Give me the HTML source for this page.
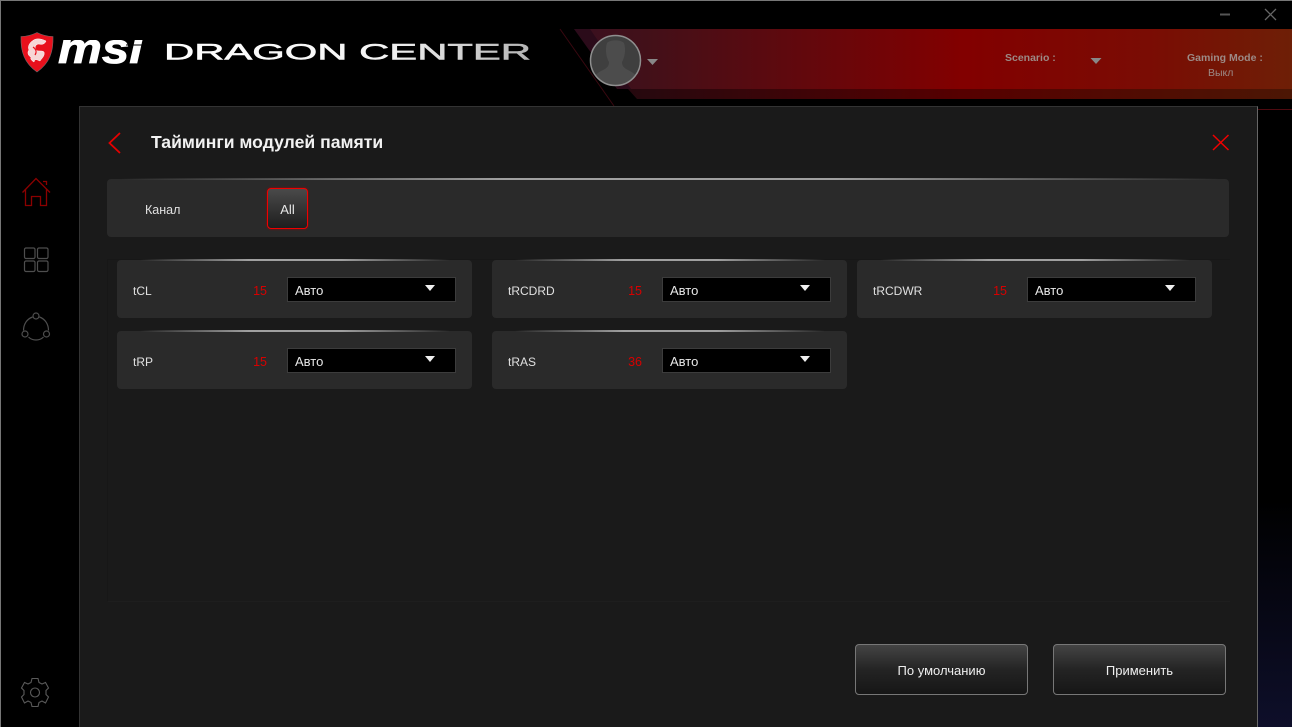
<!DOCTYPE html>
<html>
<head>
<meta charset="utf-8">
<style>
html,body{margin:0;padding:0;background:#000;}
#app{position:relative;width:1292px;height:727px;overflow:hidden;background:#000;font-family:"Liberation Sans",sans-serif;color:#e6e6e6;font-size:13px;}
#app div,#app span{position:absolute;white-space:nowrap;}
.bar{background:#2a2a2a;border-radius:4px;}
.hl{height:2px;background:linear-gradient(90deg,rgba(170,170,170,0),#a0a0a0 35%,#a0a0a0 65%,rgba(170,170,170,0));}
.lbl{line-height:16px;font-size:12px;color:#e0e0e0;}
.val{line-height:16px;font-size:12.5px;color:#d80000;text-align:right;width:30px;}
.sel{width:167px;height:23px;background:#000;border:1px solid #3c3c3c;}
.sel span{left:7px;top:5px;line-height:16px;font-size:13px;color:#e8e8e8;}
.sel i{position:absolute;left:137px;top:7px;width:0;height:0;border-left:5.5px solid transparent;border-right:5.5px solid transparent;border-top:6px solid #f0f0f0;}
.btn{top:644px;width:171px;height:49px;border:1px solid #777;border-radius:4px;background:linear-gradient(#444 0,#242424 50%,#161616 100%);text-align:center;line-height:51px;font-size:13px;color:#eee;}
.hd{font-size:10.5px;line-height:14px;color:#9c8a86;}
</style>
</head>
<body>
<div id="app">
<svg style="position:absolute;left:0;top:0" width="1292" height="727" viewBox="0 0 1292 727" fill="none">
<defs>
<linearGradient id="r1" x1="574" x2="1292" y1="0" y2="0" gradientUnits="userSpaceOnUse">
<stop offset="0" stop-color="#3a1020"/><stop offset=".1" stop-color="#421019"/><stop offset=".54" stop-color="#820000"/><stop offset=".8" stop-color="#7a0c04"/><stop offset="1" stop-color="#6e1f06"/>
</linearGradient>
<linearGradient id="r2" x1="574" x2="1292" y1="0" y2="0" gradientUnits="userSpaceOnUse">
<stop offset="0" stop-color="#1e0810"/><stop offset=".1" stop-color="#28080e"/><stop offset=".54" stop-color="#560000"/><stop offset="1" stop-color="#4c1604"/>
</linearGradient>
<linearGradient id="dc" x1="165" x2="531" y1="0" y2="0" gradientUnits="userSpaceOnUse">
<stop offset="0" stop-color="#fff"/><stop offset=".6" stop-color="#f4f4f4"/><stop offset="1" stop-color="#b4b4b4"/>
</linearGradient>
<linearGradient id="blue" x1="0" x2="0" y1="500" y2="727" gradientUnits="userSpaceOnUse">
<stop offset="0" stop-color="#000"/><stop offset="1" stop-color="#0e0f2a"/>
</linearGradient>
<clipPath id="msiclip"><rect x="50" y="40" width="100" height="30"/></clipPath>
<clipPath id="av"><circle cx="615.500" cy="60.500" r="25"/></clipPath>
</defs>
<rect x="1257" y="110" width="35" height="617" fill="url(#blue)"/>
<path d="M0.500 727V0.500H1292" stroke="#777"/>
<!-- red band -->
<polygon points="574,29 1292,29 1292,99 637,99" fill="url(#r2)"/>
<polygon points="588,29 1292,29 1292,89 631,89" fill="url(#r1)"/>
<polygon points="574,29 590,29 631,89 617,89" fill="#2b0b1a"/>
<path d="M560 29L614 106" stroke="#3a0810"/>
<path d="M1257 109.500H1292" stroke="#4e0a10"/>
<!-- window controls -->
<path d="M1220 14.500H1230" stroke="#555" stroke-width="2"/>
<path d="M1265 9L1276 20M1276 9L1265 20" stroke="#666" stroke-width="1.300"/>
<!-- shield -->
<path d="M37 32.500C42 35 48 36.500 53 36.500C53.500 51 50 63 37 72C24 63 20.500 51 21 36.500C26 36.500 32 35 37 32.500Z" fill="#e8101c" stroke="#6a6a6a" stroke-width=".6"/>
<path d="M46 41C41 38.500 36 38 33 40.500C29 43 27.500 47 29 50C27 52 28 56 31 57C30 59 32 61 34 62C35 58 37 60 40 61C42 58 45 56 44 52C42 50 38 52 36 50C34 47 36 44 39 44C42 45 45 44 46 41Z" fill="#f6d6d6" stroke="#fff" stroke-width=".5"/>
<path d="M33 47C36 49 37 52 35 55" stroke="#e8101c" stroke-width="1.200"/>
<!-- msi logo -->
<g clip-path="url(#msiclip)">
<text x="58" y="63" font-family="Liberation Sans" font-weight="700" font-style="italic" font-size="43" fill="#fff" textLength="85" lengthAdjust="spacingAndGlyphs" stroke="#fff" stroke-width=".8">msi</text>
</g>
<path d="M126 45H144" stroke="#000" stroke-width="1"/>
<!-- dragon center -->
<text x="164" y="59.500" font-family="Liberation Sans" font-size="22" fill="url(#dc)" stroke="url(#dc)" stroke-width=".5" textLength="367" lengthAdjust="spacingAndGlyphs">DRAGON CENTER</text>
<!-- avatar -->
<circle cx="615.500" cy="60.500" r="25" fill="#3f3f3f"/>
<g clip-path="url(#av)">
<path d="M607 43C610 39.500 621 39.500 624 43C626 49 625 57 622 62C622 66 624 68 628 70C632 72 635 74 637 77C630 88 601 88 594 77C596 74 599 72 603 70C607 68 609 66 609 62C606 57 605 49 607 43Z" fill="#4c4c4c"/>
</g>
<circle cx="615.500" cy="60.500" r="25" stroke="#8f8f8f" stroke-width="1.500"/>
<polygon points="647,59 658,59 652.500,65" fill="#888"/>
<polygon points="1090.500,58 1101.500,58 1096,64" fill="#888"/>
<!-- sidebar icons -->
<g stroke="#8c0000" stroke-width="1.300">
<path d="M22.500 192.500L36 178.500L50 192.500"/>
<path d="M25.500 189V205.500H31.500V196.500H40.500V205.500H46.500V189"/>
<path d="M43 181.500H46.500V185"/>
</g>
<g stroke="#4e4e4e" stroke-width="1.200">
<rect x="24.500" y="248" width="10.500" height="10.500" rx="1.500"/>
<rect x="37.500" y="248" width="10.500" height="10.500" rx="1.500"/>
<rect x="24.500" y="261" width="10.500" height="10.500" rx="1.500"/>
<rect x="37.500" y="261" width="10.500" height="10.500" rx="1.500"/>
<circle cx="36" cy="316" r="3"/>
<circle cx="25" cy="334" r="3"/>
<circle cx="46.500" cy="334" r="3"/>
<path d="M32.500 317C27 319 23.500 324 23.500 330.500M39.500 317C45 319 48.500 324 48.500 330.500M28.500 337C32.500 341 39.500 341 43.500 337"/>
</g>
<g stroke="#5a5a5a" stroke-width="1.100">
<circle cx="35" cy="692.500" r="4.500"/>
<path d="M32 678.500H38L39 682.500L42 684L45.500 682.500L48.500 688L46 690.500V694.500L48.500 697L45.500 703L42 701L39 702.500L38 706.500H32L31 702.500L28 701L24.500 703L21.500 697L24 694.500V690.500L21.500 688L24.500 682.500L28 684L31 682.500Z"/>
</g>
</svg>

<!-- header text -->
<div class="hd" style="left:1005px;top:51px;font-weight:700;">Scenario :</div>
<div class="hd" style="left:1187px;top:51px;font-weight:700;">Gaming Mode :</div>
<div class="hd" style="left:1208px;top:66px;">Выкл</div>

<!-- panel -->
<div style="left:79px;top:106px;width:1177px;height:620px;background:#1a1a1a;border:1px solid #333;border-right-color:#666;"></div>
<svg style="position:absolute;left:0;top:0" width="1292" height="727" viewBox="0 0 1292 727" fill="none">
<path d="M120 133L109.500 143L120 153" stroke="#e60000" stroke-width="1.800"/>
<path d="M1213 135L1228.500 150M1228.500 135L1213 150" stroke="#f00000" stroke-width="1.500"/>
</svg>
<div style="left:151px;top:132px;font-size:17.6px;font-weight:700;line-height:20px;color:#f2f2f2;">Тайминги модулей памяти</div>

<!-- channel bar -->
<div class="bar" style="left:107px;top:179px;width:1122px;height:58px;"></div>
<div class="hl" style="left:120px;top:178px;width:1100px;"></div>
<div class="lbl" style="left:145px;top:202px;font-size:12.5px;">Канал</div>
<div style="left:267px;top:188px;width:39px;height:39px;border:1px solid #f00000;border-radius:4px;background:linear-gradient(#4a4a4a,#1e1e1e);box-shadow:0 0 2px #a00000;text-align:center;line-height:42px;font-size:13px;color:#e8e8e8;">All</div>

<!-- inner container -->
<div style="left:107px;top:259px;width:1122px;height:341px;border-left:1px solid #171717;border-top:1px solid #171717;border-bottom:1px solid #1e1e1e;"></div>

<!-- cards row 1 -->
<div class="bar" style="left:117px;top:260px;width:355px;height:58px;"></div>
<div class="hl" style="left:140px;top:259px;width:310px;"></div>
<div class="lbl" style="left:133px;top:283px;">tCL</div>
<div class="val" style="left:237px;top:283px;">15</div>
<div class="sel" style="left:287px;top:277px;"><span>Авто</span><i></i></div>

<div class="bar" style="left:492px;top:260px;width:355px;height:58px;"></div>
<div class="hl" style="left:515px;top:259px;width:310px;"></div>
<div class="lbl" style="left:508px;top:283px;">tRCDRD</div>
<div class="val" style="left:612px;top:283px;">15</div>
<div class="sel" style="left:662px;top:277px;"><span>Авто</span><i></i></div>

<div class="bar" style="left:857px;top:260px;width:355px;height:58px;"></div>
<div class="hl" style="left:880px;top:259px;width:310px;"></div>
<div class="lbl" style="left:873px;top:283px;">tRCDWR</div>
<div class="val" style="left:977px;top:283px;">15</div>
<div class="sel" style="left:1027px;top:277px;"><span>Авто</span><i></i></div>

<!-- cards row 2 -->
<div class="bar" style="left:117px;top:331px;width:355px;height:58px;"></div>
<div class="hl" style="left:140px;top:330px;width:310px;"></div>
<div class="lbl" style="left:133px;top:354px;">tRP</div>
<div class="val" style="left:237px;top:354px;">15</div>
<div class="sel" style="left:287px;top:348px;"><span>Авто</span><i></i></div>

<div class="bar" style="left:492px;top:331px;width:355px;height:58px;"></div>
<div class="hl" style="left:515px;top:330px;width:310px;"></div>
<div class="lbl" style="left:508px;top:354px;">tRAS</div>
<div class="val" style="left:612px;top:354px;">36</div>
<div class="sel" style="left:662px;top:348px;"><span>Авто</span><i></i></div>

<!-- buttons -->
<div class="btn" style="left:855px;">По умолчанию</div>
<div class="btn" style="left:1053px;">Применить</div>
</div>
</body>
</html>
